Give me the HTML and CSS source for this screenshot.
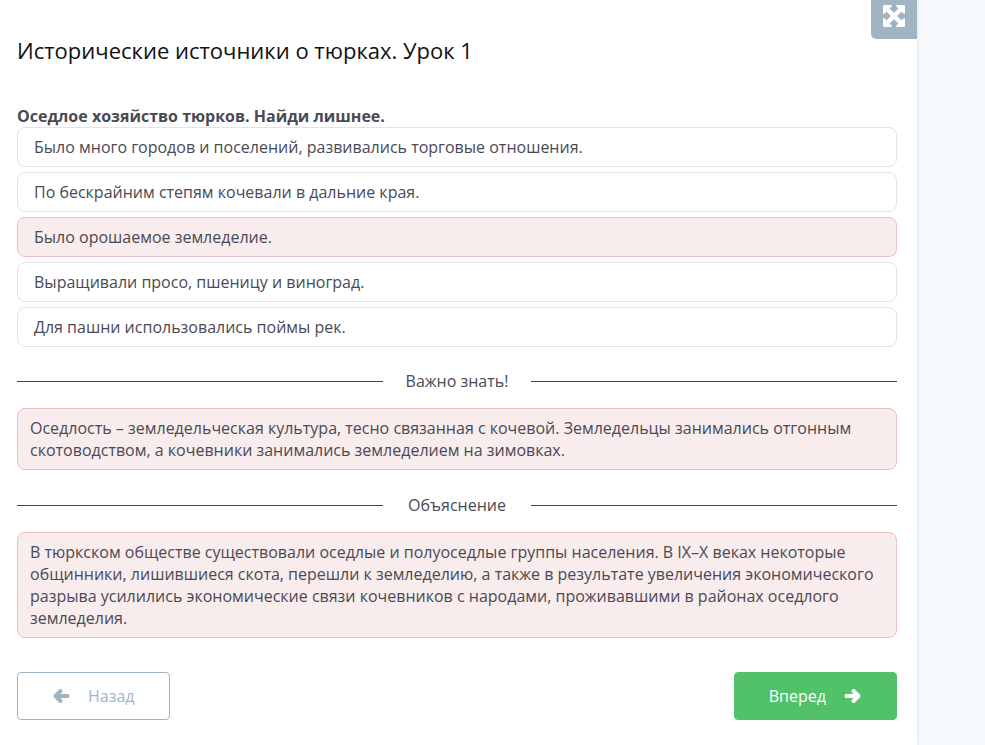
FILE: index.html
```html
<!DOCTYPE html>
<html lang="ru">
<head>
<meta charset="utf-8">
<meta name="viewport" content="width=device-width, initial-scale=1">
<title>Исторические источники о тюрках. Урок 1</title>
<link rel="stylesheet" href="styles.css">
</head>
<body>
<main class="lesson">
  <button class="expand" type="button" aria-label="На весь экран">
    <svg class="expand-icon" viewBox="0 0 22 22" aria-hidden="true">
      <path d="M4 4L18 18M18 4L4 18" stroke="currentColor" stroke-width="4.4" fill="none"/>
      <path d="M1 0H8.500L9 1L1 9L0 8.500V1ZM21 0L22 1V8.500L21 9L13 1L13.500 0ZM0 21V13.500L1 13L9 21L8.500 22H1ZM21 22H13.500L13 21L21 13L22 13.500V21Z" fill="currentColor"/>
    </svg>
  </button>
  <h1 class="title">Исторические источники о тюрках. Урок 1</h1>
  <h2 class="question">Оседлое хозяйство тюрков. Найди лишнее.</h2>
  <div class="options">
    <button class="option" type="button">Было много городов и поселений, развивались торговые отношения.</button>
    <button class="option" type="button">По бескрайним степям кочевали в дальние края.</button>
    <button class="option option-wrong" type="button">Было орошаемое земледелие.</button>
    <button class="option" type="button">Выращивали просо, пшеницу и виноград.</button>
    <button class="option" type="button">Для пашни использовались поймы рек.</button>
  </div>
  <h3 class="divider">Важно знать!</h3>
  <p class="note">Оседлость – земледельческая культура, тесно связанная с кочевой. Земледельцы занимались отгонным скотоводством, а кочевники занимались земледелием на зимовках.</p>
  <h3 class="divider">Объяснение</h3>
  <p class="note">В тюркском обществе существовали оседлые и полуоседлые группы населения. В IX–X веках некоторые общинники, лишившиеся скота, перешли к земледелию, а также в результате увеличения экономического разрыва усилились экономические связи кочевников с народами, проживавшими в районах оседлого земледелия.</p>
  <nav class="actions">
    <button class="btn btn-back" type="button">
      <svg class="arrow" viewBox="0 0 18 16" aria-hidden="true"><path d="M15.500 8H4M8.500 3L3.500 8L8.500 13" /></svg>
      <span>Назад</span>
    </button>
    <button class="btn btn-next" type="button">
      <span>Вперед</span>
      <svg class="arrow" viewBox="0 0 18 16" aria-hidden="true"><path d="M2.500 8H14M9.500 3L14.500 8L9.500 13" /></svg>
    </button>
  </nav>
</main>
</body>
</html>
```
FILE: styles.css
```css
* {
  box-sizing: border-box;
}

body {
  margin: 0;
  min-height: 100vh;
  background: #f5f9fc;
  color: #4a4a54;
  font: 16px/22px "Open Sans", "Noto Sans", sans-serif;
}

button {
  font: inherit;
  color: inherit;
  cursor: pointer;
}

.lesson {
  position: relative;
  min-height: 100vh;
  margin-right: 68px;
  padding: 35px 20px 24px 17px;
  background: #fff;
  box-shadow: 0 0 3px #d5dade;
}

.expand {
  position: absolute;
  top: 0;
  right: 0;
  display: flex;
  justify-content: center;
  width: 46px;
  height: 39px;
  padding: 5px 0 0;
  border: 0;
  border-radius: 0 0 0 5px;
  background: #9fb5c3;
  color: #fff;
}

.expand-icon {
  width: 22px;
  height: 22px;
}

.title {
  margin: 0 0 40px;
  color: #111;
  font-size: 22px;
  font-weight: 400;
  line-height: 30px;
}

.question {
  margin: 0;
  font-size: 16px;
  font-weight: 700;
}

.options {
  display: flex;
  flex-direction: column;
  gap: 5px;
  margin-bottom: 23px;
}

.option {
  padding: 8px 16px;
  border: 1px solid #e0e4e6;
  border-radius: 8px;
  background: #fff;
  text-align: left;
}

.option-wrong {
  border-color: #ecbfc3;
  background: #f9eced;
}

.divider {
  display: grid;
  grid-template-columns: 1fr 148px 1fr;
  align-items: center;
  margin: 0 0 16px;
  font-size: 16px;
  font-weight: 400;
  text-align: center;
}

.divider::before,
.divider::after {
  content: "";
  height: 1px;
  background: #464650;
}

.note {
  margin: 0 0 24px;
  padding: 8px 12px;
  border: 1px solid #ecbfc3;
  border-radius: 8px;
  background: #f9eced;
}

.actions {
  display: flex;
  justify-content: space-between;
  margin-top: 34px;
}

.btn {
  display: flex;
  align-items: center;
  gap: 18px;
  height: 48px;
  padding: 0 34px;
  border: 1px solid #9fb5c3;
  border-radius: 4px;
  background: #fff;
  color: #9fb5c3;
}

.btn-next {
  border-color: #51c16a;
  background: #51c16a;
  color: #fff;
}

.arrow {
  width: 18px;
  height: 16px;
  fill: none;
  stroke: currentColor;
  stroke-width: 4;
  stroke-linecap: round;
  stroke-linejoin: round;
}
```
